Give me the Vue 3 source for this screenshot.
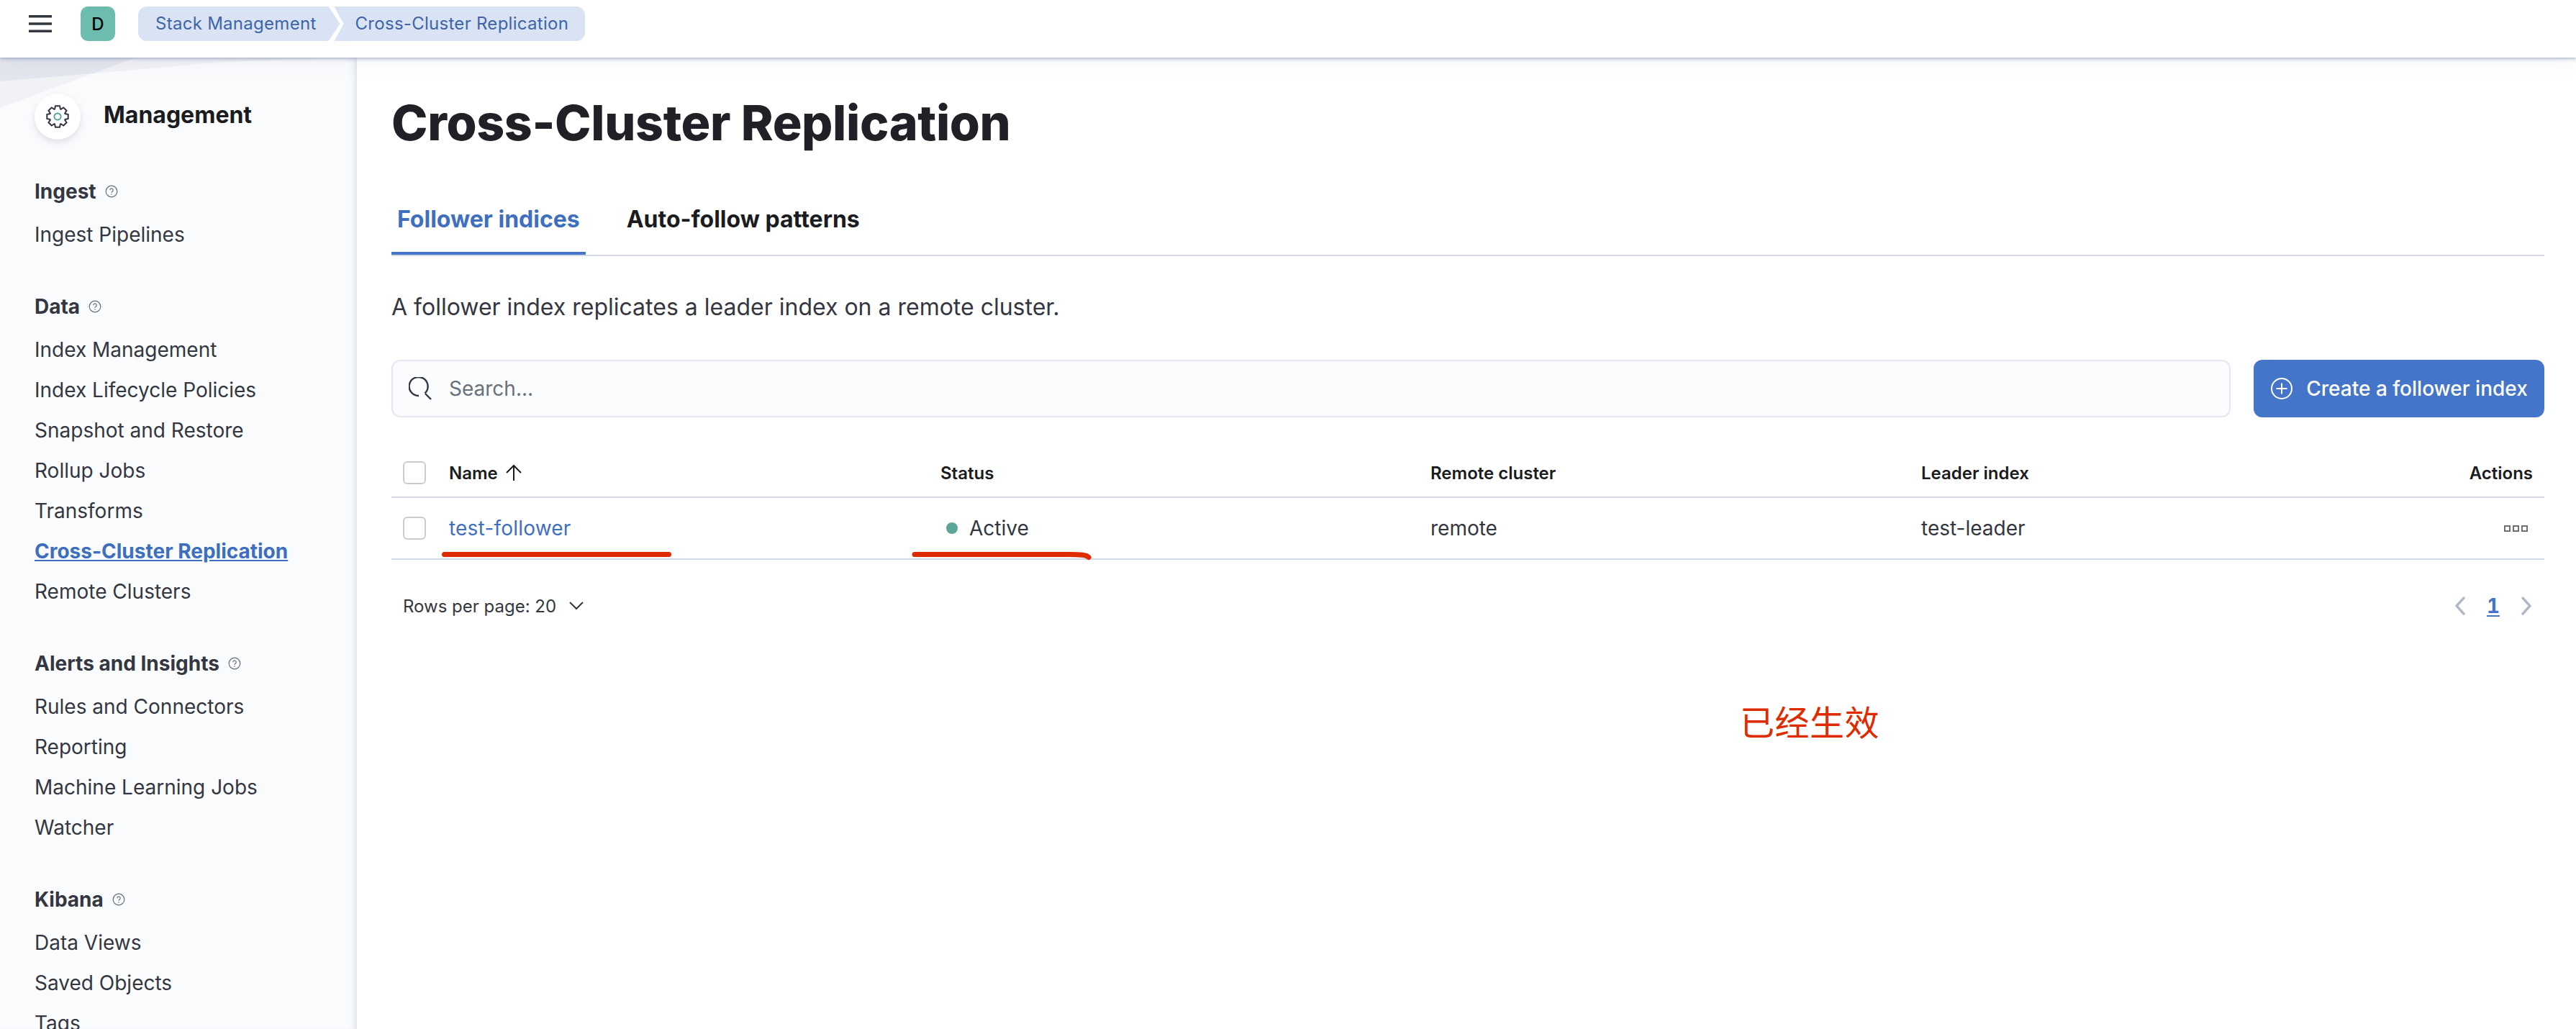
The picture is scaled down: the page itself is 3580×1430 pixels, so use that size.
<script setup>
const sections = [
  { title: "Ingest", items: ["Ingest Pipelines"] },
  {
    title: "Data",
    items: [
      "Index Management",
      "Index Lifecycle Policies",
      "Snapshot and Restore",
      "Rollup Jobs",
      "Transforms",
      "Cross-Cluster Replication",
      "Remote Clusters",
    ],
  },
  {
    title: "Alerts and Insights",
    items: ["Rules and Connectors", "Reporting", "Machine Learning Jobs", "Watcher"],
  },
  { title: "Kibana", items: ["Data Views", "Saved Objects", "Tags"] },
];

// gear outline with 8 teeth, centred on 16,16
const gear = (() => {
  const pts = [];
  for (let i = 0; i < 8; i++) {
    const a = (i * Math.PI) / 4;
    for (const [da, r] of [[-0.36, 11.2], [-0.2, 15], [0.2, 15], [0.36, 11.2]]) {
      pts.push(`${(16 + r * Math.sin(a + da)).toFixed(2)},${(16 - r * Math.cos(a + da)).toFixed(2)}`);
    }
  }
  return pts.join(" ");
})();
</script>

<template>
  <div class="page">
    <header class="topbar">
      <svg class="menu" width="32" height="24" viewBox="0 0 32 24">
        <path d="M0 1.7h32M0 12h32M0 22.3h32" stroke="#343741" stroke-width="3.4" fill="none" />
      </svg>
      <div class="avatar">D</div>
      <nav class="crumbs">
        <span class="crumb first">Stack Management</span>
        <span class="crumb last">Cross-Cluster Replication</span>
      </nav>
    </header>

    <div class="body">
      <aside class="sidebar">
        <svg class="sidebar-bg" width="496" height="80" viewBox="0 0 496 80">
          <polygon points="0,0 496,0 496,-2 300,7 130,22 0,33" fill="#f1f2f6" />
          <polygon points="0,0 188,0 0,70" fill="#f1f2f6" />
          <polygon points="0,0 188,0 130,22 0,33" fill="#e3e6ee" />
        </svg>
        <div class="brand">
          <div class="brand-icon">
            <svg width="32" height="32" viewBox="0 0 32 32">
              <polygon :points="gear" fill="none" stroke="#343741" stroke-width="2" stroke-linejoin="miter" />
              <circle cx="16" cy="16" r="4.6" fill="none" stroke="#54a898" stroke-width="2" />
            </svg>
          </div>
          <span class="brand-name">Management</span>
        </div>
        <section v-for="s in sections" :key="s.title" class="nav-section">
          <h3 class="nav-title">
            {{ s.title }}
            <svg width="18" height="18" viewBox="0 0 18 18">
              <circle cx="9" cy="9" r="7.8" fill="none" stroke="#69707d" stroke-width="1.2" />
              <path d="M6.8 7.2a2.2 2.2 0 1 1 3.4 1.8c-.8.5-1.2 1-1.2 1.8" fill="none" stroke="#69707d" stroke-width="1.2" />
              <circle cx="9" cy="13" r=".8" fill="#69707d" />
            </svg>
          </h3>
          <a
            v-for="item in s.items"
            :key="item"
            class="nav-item"
            :class="{ active: item === 'Cross-Cluster Replication' }"
          >{{ item }}</a>
        </section>
      </aside>

      <main class="main">
        <h1 class="title">Cross-Cluster Replication</h1>

        <div class="tabs">
          <div class="tab selected">Follower indices</div>
          <div class="tab">Auto-follow patterns</div>
        </div>

        <p class="desc">A follower index replicates a leader index on a remote cluster.</p>

        <div class="toolbar">
          <div class="search">
            <svg width="32" height="32" viewBox="0 0 32 32">
              <path d="M14 26A13 13 0 1 1 22.5 22.5M23 23l8 8" fill="none" stroke="#343741" stroke-width="2.4" />
            </svg>
            <span>Search...</span>
          </div>
          <button class="create">
            <svg width="32" height="32" viewBox="0 0 32 32">
              <circle cx="16" cy="16" r="14" fill="none" stroke="#fff" stroke-width="2" />
              <path d="M16 8.5v15M8.5 16h15" stroke="#fff" stroke-width="2" fill="none" />
            </svg>
            Create a follower index
          </button>
        </div>

        <div class="table">
          <div class="row head">
            <div class="cell check"><span class="box"></span></div>
            <div class="cell name-head">
              Name
              <svg width="24" height="24" viewBox="0 0 24 24">
                <path d="M12 23V2M2 12L12 2l10 10" fill="none" stroke="#1a1c21" stroke-width="2" />
              </svg>
            </div>
            <div class="cell">Status</div>
            <div class="cell">Remote cluster</div>
            <div class="cell">Leader index</div>
            <div class="cell end">Actions</div>
          </div>
          <div class="row data">
            <div class="cell check"><span class="box"></span></div>
            <div class="cell link">test-follower</div>
            <div class="cell status"><i class="dot"></i>Active</div>
            <div class="cell">remote</div>
            <div class="cell">test-leader</div>
            <div class="cell end">
              <span class="dots"><i></i><i></i><i></i></span>
            </div>
          </div>
        </div>

        <div class="footer">
          <div class="rows">
            Rows per page: 20
            <svg width="20" height="12" viewBox="0 0 20 12">
              <path d="M1 1l9 9 9-9" fill="none" stroke="#343741" stroke-width="2" />
            </svg>
          </div>
          <div class="pager">
            <svg width="14" height="26" viewBox="0 0 14 26">
              <path d="M12 2L2 13l10 11" fill="none" stroke="#b0b8c6" stroke-width="3.4" stroke-linecap="round" />
            </svg>
            <span class="page-num">1</span>
            <svg width="14" height="26" viewBox="0 0 14 26">
              <path d="M2 2l10 11L2 24" fill="none" stroke="#b0b8c6" stroke-width="3.4" stroke-linecap="round" />
            </svg>
          </div>
        </div>

        <div class="stroke one"></div>
        <svg class="stroke-two" width="256" height="14" viewBox="0 0 256 14">
          <path d="M4 4.5H218C236 4.5 243 5 246 8.5" fill="none" stroke="#de2c00" stroke-width="7" stroke-linecap="round" />
        </svg>
        <div class="note">已经生效</div>
      </main>
    </div>
  </div>
</template>

<style>
html,
body {
  margin: 0;
  background: #fff;
  overflow: hidden;
}
</style>

<style scoped>
.page {
  width: 3580px;
  height: 1430px;
  overflow: hidden;
  display: flex;
  flex-direction: column;
  font-family: Inter, "Noto Sans CJK SC", sans-serif;
  color: #343741;
}

.topbar {
  height: 80px;
  flex: none;
  box-sizing: border-box;
  padding: 9px 0 23px 40px;
  display: flex;
  align-items: center;
  background: #fff;
  box-shadow: 0 2px 4px rgba(100, 110, 150, 0.45), 0 6px 24px rgba(100, 110, 150, 0.08);
  position: relative;
  z-index: 3;
}
.avatar {
  width: 48px;
  height: 48px;
  margin-left: 40px;
  border-radius: 10px;
  background: #6dbcb0;
  color: #000;
  font-size: 24px;
  font-weight: 500;
  display: flex;
  align-items: center;
  justify-content: center;
}
.crumbs {
  display: flex;
  margin-left: 32px;
  height: 48px;
}
.crumb {
  background: #d9e3f4;
  color: #3d65a8;
  font-size: 24px;
  letter-spacing: 0.28px;
  line-height: 48px;
  white-space: nowrap;
}
.first {
  padding: 0 33px 0 24px;
  border-radius: 12px 0 0 12px;
  clip-path: polygon(0 0, calc(100% - 16px) 0, 100% 50%, calc(100% - 16px) 100%, 0 100%);
}
.last {
  margin-left: -8px;
  padding: 0 23px 0 29px;
  border-radius: 0 12px 12px 0;
  clip-path: polygon(0 0, 100% 0, 100% 100%, 0 100%, 13px 50%);
}

.body {
  flex: 1;
  display: flex;
  min-height: 0;
}

.sidebar {
  width: 496px;
  flex: none;
  box-sizing: border-box;
  padding: 50px 0 0 48px;
  background: #fafbfd;
  box-shadow: inset -8px 0 10px -6px rgba(100, 110, 140, 0.22);
  position: relative;
}
.sidebar-bg {
  position: absolute;
  left: 0;
  top: 0;
}
.brand {
  display: flex;
  align-items: center;
  gap: 32px;
  height: 64px;
  position: relative;
  margin-bottom: 56px;
}
.brand-icon {
  width: 64px;
  height: 64px;
  border-radius: 50%;
  background: #fff;
  box-shadow: 0 4px 10px rgba(100, 110, 140, 0.2);
  display: flex;
  align-items: center;
  justify-content: center;
}
.brand-name {
  font-size: 32px;
  font-weight: 700;
  color: #1a1c21;
  margin-top: -6px;
}
.nav-section {
  margin-bottom: 56px;
}
.nav-title {
  margin: 0 0 16px;
  height: 32px;
  display: flex;
  align-items: center;
  gap: 12px;
  font-size: 28px;
  font-weight: 700;
  color: #343741;
}
.nav-item {
  display: block;
  height: 56px;
  line-height: 56px;
  font-size: 28px;
  color: #343741;
}
.nav-item.active {
  color: #3d6fbe;
  font-weight: 700;
  text-decoration: underline;
}

.main {
  flex: 1;
  min-width: 0;
  box-sizing: border-box;
  padding: 50px 44px 0 48px;
  position: relative;
}
.title {
  margin: 0;
  font-size: 68px;
  line-height: 80px;
  font-weight: 800;
  letter-spacing: -0.37px;
  color: #1f2126;
}
.tabs {
  margin-top: 46px;
  height: 100px;
  box-sizing: border-box;
  border-bottom: 2px solid #d3dae6;
  display: flex;
  gap: 49px;
}
.tab {
  height: 98px;
  box-sizing: border-box;
  padding: 0 8px;
  line-height: 98px;
  font-size: 32px;
  font-weight: 700;
  color: #1a1c21;
}
.tab.selected {
  color: #3f6fc0;
  box-shadow: inset 0 -4px 0 #4575c8;
}
.desc {
  margin: 47px 0 0;
  font-size: 32px;
  line-height: 48px;
  color: #343741;
}
.toolbar {
  margin-top: 49px;
  display: flex;
  gap: 32px;
  height: 80px;
}
.search {
  flex: 1;
  box-sizing: border-box;
  border: 2px solid #e4e7f2;
  border-radius: 12px;
  background: #fbfcfd;
  display: flex;
  align-items: center;
  gap: 24px;
  padding-left: 22px;
  font-size: 28px;
  color: #69707d;
}
.create {
  width: 404px;
  flex: none;
  border: 0;
  border-radius: 12px;
  background: #4575c8;
  color: #fff;
  font: 500 28px Inter, sans-serif;
  display: flex;
  align-items: center;
  justify-content: center;
  gap: 18px;
  padding: 0;
}

.table {
  margin-top: 44px;
}
.row {
  display: grid;
  grid-template-columns: 65px 682px 681px 682px 1fr 200px;
  align-items: center;
  border-bottom: 2px solid #d3dae6;
}
.row.head {
  height: 66px;
  font-size: 24px;
  font-weight: 600;
  color: #1a1c21;
}
.row.data {
  height: 84px;
  font-size: 28px;
  color: #343741;
}
.cell {
  padding: 0 16px;
  display: flex;
  align-items: center;
}
.check {
  padding: 0 0 0 16px;
}
.box {
  width: 32px;
  height: 32px;
  box-sizing: border-box;
  border: 2px solid #cbcbcb;
  border-radius: 6px;
  background: #fff;
}
.name-head {
  gap: 10px;
  margin-left: -1px;
}
.link {
  color: #3f6fc0;
  font-size: 28px;
  letter-spacing: 0.2px;
  margin-left: -1px;
}
.dot {
  width: 16px;
  height: 16px;
  border-radius: 50%;
  background: #5ba698;
  margin: 0 16px 0 8px;
}
.end {
  justify-content: flex-end;
}
.dots {
  display: flex;
  gap: 3px;
  margin-right: 7px;
}
.dots i {
  width: 9px;
  height: 9px;
  box-sizing: border-box;
  border: 2px solid #6f6f6f;
}
.footer {
  margin-top: 44px;
  height: 40px;
  padding: 0 18px 0 16px;
  display: flex;
  align-items: center;
  justify-content: space-between;
}
.rows {
  display: flex;
  align-items: center;
  gap: 18px;
  font-size: 24px;
  color: #343741;
}
.pager {
  display: flex;
  align-items: center;
  gap: 30px;
}
.page-num {
  font-size: 28px;
  font-weight: 700;
  font-feature-settings: "tnum";
  color: #4575c8;
  text-decoration: underline;
  text-decoration-thickness: 2px;
  text-underline-offset: 3px;
}
/* hand-drawn red marks and the note lie over the page */
.stroke.one {
  position: absolute;
  left: 118px;
  top: 687px;
  width: 319px;
  height: 7px;
  border-radius: 4px;
  background: #de2c00;
}
.stroke-two {
  position: absolute;
  left: 771px;
  top: 686px;
}
.note {
  position: absolute;
  left: 1922px;
  top: 891px;
  font-size: 48px;
  letter-spacing: 0.5px;
  line-height: 60px;
  color: #de2c00;
  font-family: "Noto Sans CJK SC", sans-serif;
}
</style>
